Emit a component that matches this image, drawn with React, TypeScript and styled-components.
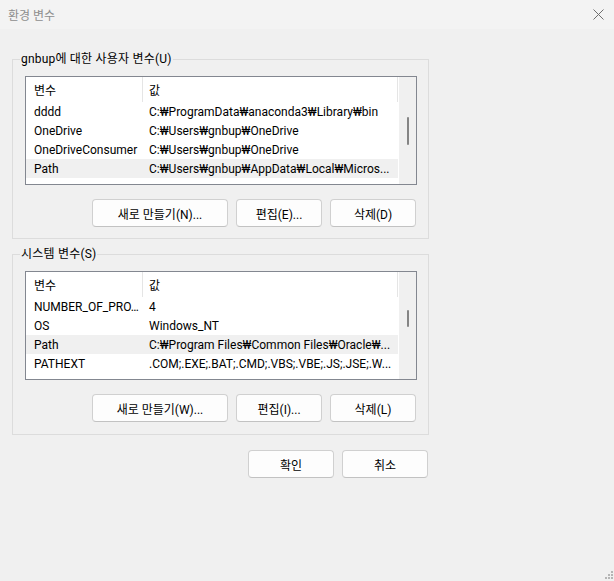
import React from "react";
import styled, { createGlobalStyle } from "styled-components";

const GlobalStyle = createGlobalStyle`
  html, body {
    margin: 0;
    padding: 0;
    background: #f0f0f0;
  }
  body {
    font-family: Roboto, "Noto Sans CJK KR", sans-serif;
    font-size: 12px;
    color: #000;
  }
  * { box-sizing: border-box; }
`;

const Window = styled.div`
  position: relative;
  width: 614px;
  height: 581px;
  background: #f0f0f0;
  display: flex;
  flex-direction: column;
  overflow: hidden;
`;

const TitleBar = styled.div`
  height: 29px;
  flex: none;
  display: flex;
  align-items: center;
  justify-content: space-between;
  padding: 0 10px 0 8px;
  background: #f3f3f3;
  color: #8e8e8e;
  font-size: 12px;
`;

const CloseIcon = styled.svg`
  display: block;
  width: 11px;
  height: 11px;
`;

const Content = styled.div`
  display: flex;
  flex-direction: column;
  padding: 23px 0 0 12px;
  width: 429px;
`;

const Group = styled.fieldset<{ $gapTop?: number; $padBottom: number }>`
  margin: ${(p) => p.$gapTop ?? 0}px 0 0 0;
  padding: 10px 0 ${(p) => p.$padBottom}px 0;
  border: 1px solid #dcdcdc;
  min-width: 0;
  width: 417px;
`;

const Legend = styled.legend`
  margin-left: 7px;
  padding: 0 1px;
  line-height: 14px;
  height: 14px;
  font-size: 12px;
  color: #000;
  letter-spacing: 0.2px;
`;

const GroupBody = styled.div`
  display: flex;
  flex-direction: column;
  padding: 0 12px;
`;

const ListBox = styled.div`
  width: 392px;
  height: 109px;
  border: 1px solid #838790;
  background: #fff;
  display: flex;
  overflow: hidden;
`;

const ListMain = styled.div`
  flex: 1;
  display: flex;
  flex-direction: column;
  overflow: hidden;
`;

const HeaderRow = styled.div`
  flex: none;
  height: 25px;
  display: flex;
`;

const HeaderCell = styled.div<{ $w: number; $pad: number }>`
  flex: none;
  width: ${(p) => p.$w}px;
  padding-left: ${(p) => p.$pad}px;
  padding-top: 3px;
  border-right: 1px solid #e5e5e5;
  line-height: 22px;
`;

const Row = styled.div<{ $selected?: boolean }>`
  flex: none;
  height: 19px;
  width: 372px;
  display: flex;
  background: ${(p) => (p.$selected ? "#f0f0f0" : "transparent")};
`;

const Cell = styled.div<{ $w: number; $pad: number }>`
  flex: none;
  width: ${(p) => p.$w}px;
  padding-left: ${(p) => p.$pad}px;
  padding-right: 4px;
  padding-top: 2px;
  line-height: 17px;
  white-space: nowrap;
  overflow: hidden;
  text-overflow: ellipsis;
`;

const ScrollTrack = styled.div`
  flex: none;
  width: 17px;
  background: #f0f0f0;
  display: flex;
  flex-direction: column;
  align-items: center;
`;

const Thumb = styled.div<{ $top: number; $h: number }>`
  margin-top: ${(p) => p.$top}px;
  width: 2px;
  height: ${(p) => p.$h}px;
  border-radius: 1px;
  background: #858585;
`;

const ButtonRow = styled.div`
  display: flex;
  justify-content: flex-end;
  gap: 8px;
  margin-top: 14px;
`;

const Button = styled.button<{ $w: number }>`
  width: ${(p) => p.$w}px;
  height: 28px;
  padding: 0;
  margin: 0;
  background: #fdfdfd;
  border: 1px solid #d0d0d0;
  border-bottom-color: #c2c2c2;
  border-radius: 4px;
  font-family: Roboto, "Noto Sans CJK KR", sans-serif;
  font-size: 12px;
  color: #000;
  display: flex;
  align-items: center;
  justify-content: center;
`;

const Footer = styled.div`
  display: flex;
  justify-content: flex-end;
  gap: 8px;
  margin-top: 15px;
  width: 416px;
`;

const Grip = styled.svg`
  position: absolute;
  right: 0;
  bottom: 0;
  width: 12px;
  height: 11px;
`;

type Item = { name: string; value: string; selected?: boolean };

const userVars: Item[] = [
  { name: "dddd", value: "C:₩ProgramData₩anaconda3₩Library₩bin" },
  { name: "OneDrive", value: "C:₩Users₩gnbup₩OneDrive" },
  { name: "OneDriveConsumer", value: "C:₩Users₩gnbup₩OneDrive" },
  { name: "Path", value: "C:₩Users₩gnbup₩AppData₩Local₩Micros...", selected: true },
];

const systemVars: Item[] = [
  { name: "NUMBER_OF_PRO...", value: "4" },
  { name: "OS", value: "Windows_NT" },
  { name: "Path", value: "C:₩Program Files₩Common Files₩Oracle₩...", selected: true },
  { name: "PATHEXT", value: ".COM;.EXE;.BAT;.CMD;.VBS;.VBE;.JS;.JSE;.W..." },
];

function VarList({ items, thumbTop, thumbH }: { items: Item[]; thumbTop: number; thumbH: number }) {
  return (
    <ListBox>
      <ListMain>
        <HeaderRow>
          <HeaderCell $w={117} $pad={8}>변수</HeaderCell>
          <HeaderCell $w={255} $pad={6}>값</HeaderCell>
        </HeaderRow>
        {items.map((it, i) => (
          <Row key={i} $selected={it.selected}>
            <Cell $w={117} $pad={8}>{it.name}</Cell>
            <Cell $w={255} $pad={6}>{it.value}</Cell>
          </Row>
        ))}
      </ListMain>
      <ScrollTrack>
        <Thumb $top={thumbTop} $h={thumbH} />
      </ScrollTrack>
    </ListBox>
  );
}

export default function App() {
  return (
    <>
      <GlobalStyle />
      <Window>
        <TitleBar>
          <span>환경 변수</span>
          <CloseIcon viewBox="0 0 11 11">
            <path d="M0.5 0.5 L10.5 10.5 M10.5 0.5 L0.5 10.5" stroke="#6e6e6e" strokeWidth="1" fill="none" />
          </CloseIcon>
        </TitleBar>
        <Content>
          <Group $padBottom={11}>
            <Legend>gnbup에 대한 사용자 변수(U)</Legend>
            <GroupBody>
              <VarList items={userVars} thumbTop={40} thumbH={28} />
              <ButtonRow>
                <Button $w={136}>새로 만들기(N)...</Button>
                <Button $w={86}>편집(E)...</Button>
                <Button $w={86}>삭제(D)</Button>
              </ButtonRow>
            </GroupBody>
          </Group>
          <Group $gapTop={8} $padBottom={12}>
            <Legend>시스템 변수(S)</Legend>
            <GroupBody>
              <VarList items={systemVars} thumbTop={38} thumbH={17} />
              <ButtonRow>
                <Button $w={136}>새로 만들기(W)...</Button>
                <Button $w={86}>편집(I)...</Button>
                <Button $w={86}>삭제(L)</Button>
              </ButtonRow>
            </GroupBody>
          </Group>
          <Footer>
            <Button $w={86}>확인</Button>
            <Button $w={86}>취소</Button>
          </Footer>
        </Content>
        <Grip viewBox="0 0 12 11">
          <g fill="#b5b5b5">
            <rect x="9" y="1" width="2" height="2" />
            <rect x="6" y="4" width="2" height="2" />
            <rect x="9" y="4" width="2" height="2" />
            <rect x="3" y="7" width="2" height="2" />
            <rect x="6" y="7" width="2" height="2" />
            <rect x="9" y="7" width="2" height="2" />
          </g>
        </Grip>
      </Window>
    </>
  );
}
